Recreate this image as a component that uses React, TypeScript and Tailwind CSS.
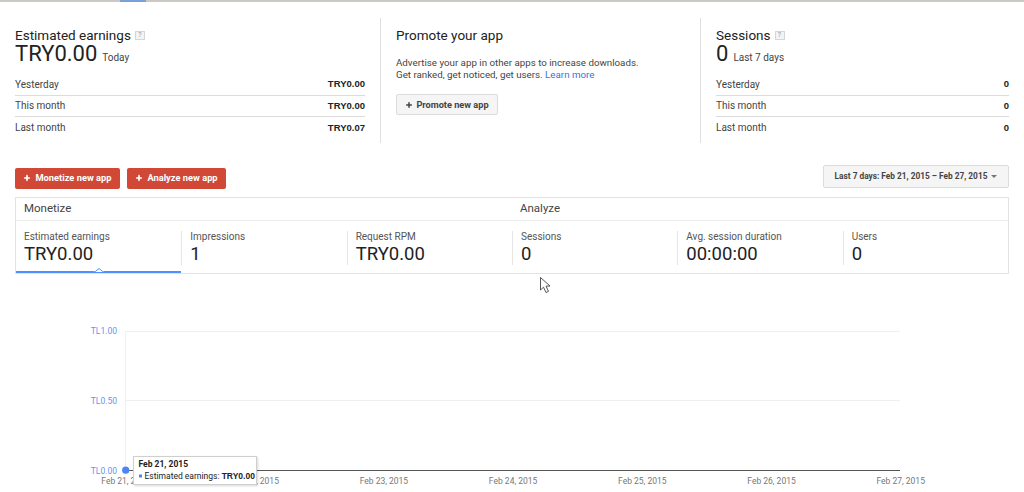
import { Plus } from "lucide-react"

const earningsRows = [
    { label: "Yesterday", value: "TRY0.00" },
    { label: "This month", value: "TRY0.00" },
    { label: "Last month", value: "TRY0.07" },
]

const sessionRows = [
    { label: "Yesterday", value: "0" },
    { label: "This month", value: "0" },
    { label: "Last month", value: "0" },
]

const metrics = [
    { label: "Estimated earnings", value: "TRY0.00", active: true },
    { label: "Impressions", value: "1" },
    { label: "Request RPM", value: "TRY0.00" },
    { label: "Sessions", value: "0" },
    { label: "Avg. session duration", value: "00:00:00" },
    { label: "Users", value: "0" },
]

const xLabels = ["Feb 21, 2015", "Feb 22, 2015", "Feb 23, 2015", "Feb 24, 2015", "Feb 25, 2015", "Feb 26, 2015", "Feb 27, 2015"]

function Help() {
    return (
        <span className="ml-[4px] inline-flex h-[9px] w-[10px] items-center justify-center border border-[#d6d6d6] bg-[#f3f3f3] text-[7px] leading-none text-[#999]">
            ?
        </span>
    )
}

function StatRows({ rows }: { rows: { label: string; value: string }[] }) {
    return (
        <div className="mt-[5px]">
            {rows.map((r, i) => (
                <div
                    key={r.label}
                    className={`flex h-[21.5px] items-center justify-between text-[10px] ${
                        i < rows.length - 1 ? "border-b border-[#dcdcdc]" : ""
                    }`}
                >
                    <span className="text-[#444]">{r.label}</span>
                    <span className="font-bold font-['Liberation_Sans',sans-serif] text-[9.5px] text-[#222]">{r.value}</span>
                </div>
            ))}
        </div>
    )
}

function Chart() {
    const xs = xLabels.map((_, i) => 125.5 + i * 129.2)
    return (
        <svg width="1024" height="219" viewBox="0 273 1024 219" className="block">
            <defs>
                <filter id="tip" x="-10%" y="-20%" width="130%" height="160%">
                    <feDropShadow dx="1" dy="1" stdDeviation="1" floodColor="#000" floodOpacity="0.15" />
                </filter>
            </defs>
            {/* grid */}
            <line x1="125.5" y1="330.5" x2="900" y2="330.5" stroke="#efefef" />
            <line x1="125.5" y1="399.5" x2="900" y2="399.5" stroke="#efefef" />
            <line x1="125.5" y1="330" x2="125.5" y2="469" stroke="#f0f0f0" />
            <line x1="125" y1="469.5" x2="900" y2="469.5" stroke="#555" />

            {/* y axis */}
            <g fill="#5f95f2" fontFamily="Roboto, sans-serif" fontSize="8.5" textAnchor="end">
                <text x="117" y="333">TL1.00</text>
                <text x="117" y="402.5">TL0.50</text>
                <text x="117" y="472.5">TL0.00</text>
            </g>

            {/* x axis */}
            <g fill="#777" fontFamily="Roboto, sans-serif" fontSize="8.5" textAnchor="middle">
                {xLabels.map((l, i) => (
                    <text key={l} x={xs[i]} y="482.5">{l}</text>
                ))}
            </g>

            <circle cx="125.7" cy="469.2" r="3.6" fill="#4d86ee" />

            {/* tooltip */}
            <g filter="url(#tip)">
                <rect x="133.5" y="455.5" width="123" height="28" fill="#fff" stroke="#cfcfcf" />
            </g>
            <text x="138.5" y="466" fontFamily="Roboto, sans-serif" fontSize="8.5" fontWeight="bold" fill="#222">Feb 21, 2015</text>
            <rect x="139" y="473.5" width="3" height="3" fill="#4d86ee" />
            <text x="144.5" y="478" fontFamily="Roboto, sans-serif" fontSize="8.5" fill="#222">
                Estimated earnings: <tspan fontWeight="bold" fontFamily="Liberation Sans, sans-serif">TRY0.00</tspan>
            </text>

            {/* mouse pointer */}
            <path
                d="M540.5 276.5 L540.5 289 L543.5 286.2 L546 291.5 L548.5 290.3 L546 285.2 L550 285 Z"
                fill="#fff"
                stroke="#444"
                strokeWidth="0.9"
                strokeLinejoin="round"
            />
        </svg>
    )
}

export default function App() {
    return (
        <div className="h-[492px] w-[1024px] overflow-hidden bg-white font-[Roboto,sans-serif] text-[#222]">
            {/* top strip */}
            <div className="flex h-[2px] bg-[#ccc8c4]">
                <div className="ml-[120px] w-[26px] bg-[#7c9fd8]" />
            </div>

            {/* summary */}
            <div className="mt-[16px] flex h-[125px] px-[15px]">
                <div className="w-[350px] pt-[9px]">
                    <div className="flex items-center text-[13.5px] leading-[16px] text-[#222]">
                        Estimated earnings <Help />
                    </div>
                    <div className="flex items-baseline leading-[22px]">
                        <span className="text-[22px] text-[#222]">TRY0.00</span>
                        <span className="ml-[5px] text-[10px] text-[#444]">Today</span>
                    </div>
                    <StatRows rows={earningsRows} />
                </div>

                <div className="ml-[15px] w-[320px] border-l border-[#e0e0e0] pl-[15px] pt-[9px]">
                    <div className="text-[13.5px] leading-[16px] text-[#222]">Promote your app</div>
                    <p className="mt-[14px] text-[9.75px] leading-[11.5px] text-[#444]">
                        Advertise your app in other apps to increase downloads.
                        <br />
                        Get ranked, get noticed, get users. <span className="text-[#3b73d9]">Learn more</span>
                    </p>
                    <button className="mt-[14px] flex h-[21px] w-[102px] items-center justify-center gap-[3px] rounded-[2px] border border-[#dcdcdc] bg-[#f5f5f5] text-[9.2px] font-bold text-[#444]">
                        <Plus className="h-[8px] w-[8px]" strokeWidth={4.5} />
                        Promote new app
                    </button>
                </div>

                <div className="flex-1 border-l border-[#e0e0e0] pl-[15px] pt-[9px]">
                    <div className="flex items-center text-[13.5px] leading-[16px] text-[#222]">
                        Sessions <Help />
                    </div>
                    <div className="flex items-baseline leading-[22px]">
                        <span className="text-[22px] text-[#222]">0</span>
                        <span className="ml-[5px] text-[10px] text-[#444]">Last 7 days</span>
                    </div>
                    <StatRows rows={sessionRows} />
                </div>
            </div>

            {/* action buttons */}
            <div className="mt-[22px] flex h-[24px] items-start justify-between px-[15px]">
                <div className="mt-[2.5px] flex gap-[7px]">
                    <button className="flex h-[21.5px] w-[105px] items-center justify-center gap-[4px] rounded-[2px] bg-[#d14836] text-[9.3px] font-bold text-white">
                        <Plus className="h-[8px] w-[8px]" strokeWidth={5} />
                        Monetize new app
                    </button>
                    <button className="flex h-[21.5px] w-[99px] items-center justify-center gap-[4px] rounded-[2px] bg-[#d14836] text-[9.3px] font-bold text-white">
                        <Plus className="h-[8px] w-[8px]" strokeWidth={5} />
                        Analyze new app
                    </button>
                </div>
                <button className="flex h-[22.5px] w-[186px] items-center justify-center gap-[4px] rounded-[2px] border border-[#dcdcdc] bg-[#f5f5f5] text-[8.3px] font-bold text-[#444]">
                    Last 7 days: Feb 21, 2015 – Feb 27, 2015
                    <span className="h-0 w-0 border-x-[3px] border-t-[3px] border-x-transparent border-t-[#777]" />
                </button>
            </div>

            {/* metrics panel */}
            <div className="mx-[15px] mt-[8px] border border-[#e3e3e3]">
                <div className="grid h-[23px] grid-cols-2 items-center border-b border-[#ebebeb] text-[11.5px] text-[#444]">
                    <div className="pl-[8px]">Monetize</div>
                    <div className="pl-[8px]">Analyze</div>
                </div>
                <div className="grid grid-cols-6">
                    {metrics.map((m, i) => (
                        <div
                            key={m.label}
                            className={`relative pb-[6px] pt-[10px] ${m.active ? "border-b-2 border-[#4d90fe]" : "mb-[2px]"}`}
                        >
                            <div className={`h-[34px] pl-[8px] ${i > 0 ? "border-l border-[#e5e5e5]" : ""}`}>
                                <div className="text-[10px] leading-[12px] text-[#555]">{m.label}</div>
                                <div className="text-[18.5px] leading-[22px] text-[#222]">{m.value}</div>
                            </div>
                            {m.active && (
                                <svg className="absolute bottom-[-2px] left-[78px]" width="10" height="6" viewBox="0 0 10 6">
                                    <path d="M0 5 L5 1 L10 5 Z" fill="#fff" />
                                    <path d="M0.5 5.2 L5 1.5 L9.5 5.2" fill="none" stroke="#4d90fe" strokeWidth="1" />
                                </svg>
                            )}
                        </div>
                    ))}
                </div>
            </div>

            <Chart />
        </div>
    )
}
